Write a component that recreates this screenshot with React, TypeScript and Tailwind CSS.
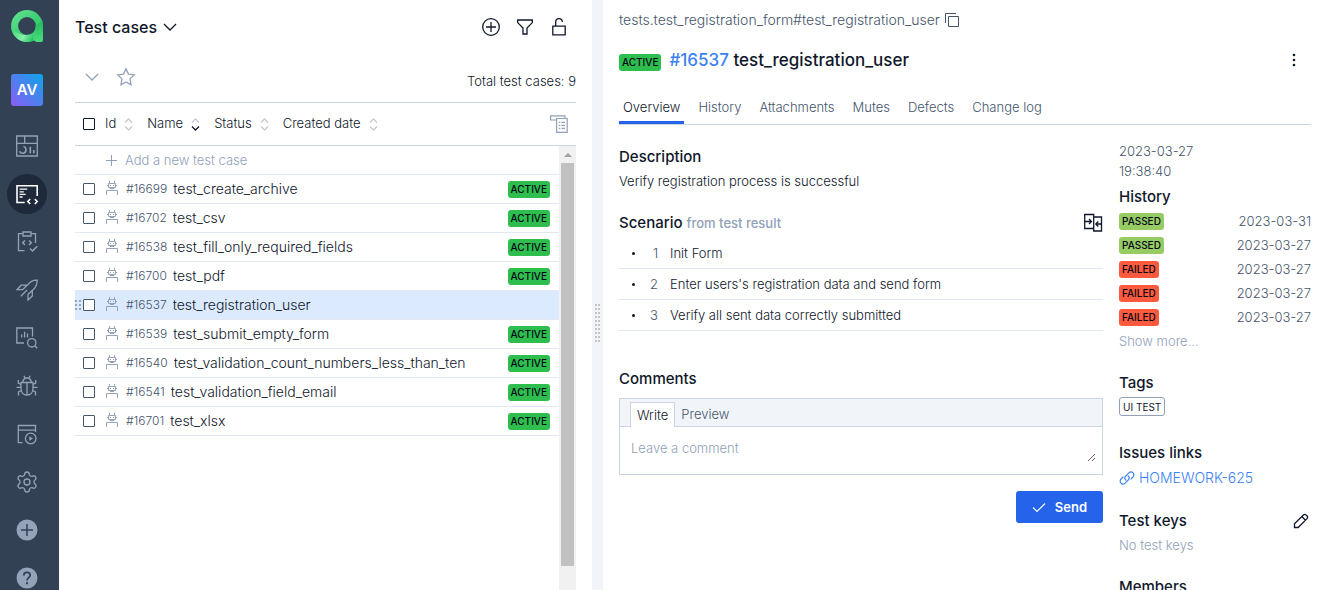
import type { ReactNode } from "react";
import { Settings } from "lucide-react";

type IconProps = { children: ReactNode; size?: number; box?: string; stroke?: number };

function Icon({ children, size = 24, box = "0 0 24 24", stroke = 1.3 }: IconProps) {
  return (
    <svg width={size} height={size} viewBox={box} fill="none" stroke="currentColor" strokeWidth={stroke} aria-hidden="true" className="shrink-0">
      {children}
    </svg>
  );
}

function Logo() {
  return (
    <svg width="32" height="32" viewBox="0 0 32 32" aria-hidden="true">
      <defs>
        <linearGradient id="ring" x1="0" y1="0" x2="1" y2="1">
          <stop offset="0" stopColor="#5fe08d" />
          <stop offset="0.5" stopColor="#3fd076" />
          <stop offset="1" stopColor="#22c55e" />
        </linearGradient>
        <linearGradient id="sweep" x1="0" y1="0" x2="1" y2="0.3">
          <stop offset="0" stopColor="#3ad271" />
          <stop offset="0.6" stopColor="#86efac" />
          <stop offset="1" stopColor="#22c55e" />
        </linearGradient>
        <linearGradient id="stem" x1="0" y1="0" x2="0" y2="1">
          <stop offset="0" stopColor="#22b95a" />
          <stop offset="1" stopColor="#4ade80" />
        </linearGradient>
      </defs>
      <circle cx="16" cy="16" r="12.4" fill="none" stroke="url(#ring)" strokeWidth="7" />
      <path d="M0.2 18C1.5 26 8 32 16 32c5 0 8-1.5 10-4l-3-5.4C20 26 9 27 0.2 18Z" fill="url(#sweep)" />
      <path d="M24.5 16c0 4-1 6-2.500 7.500V27c0 3 2 5 5 5h3a2 2 0 0 0 2-2V16c0-2-.3-3.500-.8-5Z" fill="url(#stem)" />
    </svg>
  );
}

const navItems: { label: string; active?: boolean; icon: ReactNode }[] = [
  {
    label: "Dashboards",
    icon: (
      <Icon>
        <path d="M1.700 2h20.600v20H1.700zM1.700 9.300h20.600M9.700 2v7.300" />
        <path d="M8.500 12.600a3.400 3.400 0 1 1-4 4.600M15.300 12.800v6.500M18.800 16v3.300" strokeWidth="1.600" />
      </Icon>
    ),
  },
  {
    label: "Test cases",
    active: true,
    icon: (
      <Icon stroke={1.6}>
        <path d="M9.700 20.500H2V3.800h20.200V14" />
        <path d="M4.600 7.200h7.600M4.600 9.800h4.200M4.600 12.400h6M4.600 15h3" strokeWidth="1.300" />
        <path d="m15.200 17-2.400 2.500 2.400 2.500M19.800 17l2.400 2.500-2.400 2.500" />
      </Icon>
    ),
  },
  {
    label: "Test plans",
    icon: (
      <Icon>
        <path d="M8 3.700H3.500v17h6M16 3.700h4.500V13M8 2h8v4H8z" />
        <path d="m10 10.500-2.300 2.300L10 15M14 10.500l2.300 2.300L14 15M15 18.500l2.500 2.500 4.800-4.800" strokeWidth="1.500" />
      </Icon>
    ),
  },
  {
    label: "Launches",
    icon: (
      <Icon>
        <path d="M7.500 11.700H2l4.200-4.500h6.300C15 3.500 18.500 2 22.200 2.200c0 3.800-1.400 7.500-4.900 10.300V18L13 22v-5.600M12 12l-6.200 6.200M7.500 11.700l4.500-4.500M12.800 16.400l4.500-3.900" />
      </Icon>
    ),
  },
  {
    label: "Analytics",
    icon: (
      <Icon>
        <path d="M9 17H1.800V2h15.700v8.500M6.700 8.500v3M9.600 5.700v5.800M12.500 7.500v4" />
        <circle cx="16.800" cy="16.800" r="4.200" />
        <path d="m19.800 19.800 2.500 2.500" />
      </Icon>
    ),
  },
  {
    label: "Defects",
    icon: (
      <Icon>
        <path d="M6 8.500h12v6c0 4-2.500 6.500-6 6.500s-6-2.500-6-6.500zM7.500 8.500C8 5.500 9.500 4 12 4s4 1.500 4.500 4.500M12 8.500V21M9 1.800l1 2.500M15 1.800l-1 2.500" />
        <path d="M6 10.500 3.300 9V6M6 13.300H1.500M6.500 16.500 3.500 18v3.500M18 10.500 20.700 9V6M18 13.300h4.500M17.500 16.500l3 1.500v3.500" />
      </Icon>
    ),
  },
  {
    label: "Jobs",
    icon: (
      <Icon>
        <path d="M7.500 20.700H3.300V3.500h17.200v4.700H3.300M20.500 8.200V10" />
        <circle cx="15.700" cy="16.500" r="5.300" />
        <path d="m14.300 14.300 3.700 2.200-3.700 2.200z" fill="currentColor" stroke="none" />
      </Icon>
    ),
  },
  { label: "Settings", icon: <Settings size={24} strokeWidth={1.3} /> },
  {
    label: "Create",
    icon: (
      <Icon>
        <circle cx="12" cy="12" r="10.500" fill="currentColor" stroke="none" />
        <path d="M12 6v12M6 12h12" stroke="#334155" strokeWidth="1.500" />
      </Icon>
    ),
  },
  {
    label: "Help",
    icon: (
      <Icon>
        <circle cx="12" cy="12" r="10.500" fill="currentColor" stroke="none" />
        <path d="M8.800 9.500c0-2 1.300-3.200 3.200-3.200s3.200 1.100 3.200 2.900c0 2.400-3.200 2.600-3.200 5.200" stroke="#334155" strokeWidth="1.800" />
        <path d="M12 16.200v2" stroke="#334155" strokeWidth="2" />
      </Icon>
    ),
  },
];

function Sidebar() {
  return (
    <nav className="flex flex-col overflow-hidden bg-[#334155] pl-[7px]">
      <a href="#home" aria-label="Home" className="mt-[10px] flex w-10 shrink-0 justify-center">
        <Logo />
      </a>
      <a
        href="#project"
        className="mx-1 mt-8 mb-4 flex size-8 shrink-0 items-center justify-center rounded-[3px] bg-[linear-gradient(45deg,#8b5cf6,#0ea5e9)] text-[15px] font-semibold text-white"
      >
        AV
      </a>
      {navItems.map((item) => (
        <a key={item.label} href="#section" aria-label={item.label} className="flex h-12 w-10 shrink-0 items-center justify-center">
          {item.active ? (
            <span className="flex size-10 items-center justify-center rounded-full bg-[#1e293b] text-white">{item.icon}</span>
          ) : (
            <span className="text-[#94a3b8]">{item.icon}</span>
          )}
        </a>
      ))}
    </nav>
  );
}

function Chevron() {
  return (
    <Icon size={14} box="0 0 14 14">
      <path d="m1 4 6 6 6-6" />
    </Icon>
  );
}

function SortIcon({ active = false }: { active?: boolean }) {
  return (
    <svg width="9" height="13" viewBox="0 0 9 13" fill="none" strokeWidth="1.300" aria-hidden="true">
      <path d="M1 4.500 4.500 1 8 4.500" stroke="#c5cad1" />
      <path d="M1 8.500 4.500 12 8 8.500" stroke={active ? "#0f172a" : "#c5cad1"} />
    </svg>
  );
}

function RobotIcon() {
  return (
    <svg width="12" height="16" viewBox="0 0 12 16" fill="none" stroke="#94a3b8" aria-hidden="true" className="shrink-0">
      <path d="M2.500 2.500h7v4h-7zM3.500 0v2M8.500 0v2M1.500 4v1M10.500 4v1M4 7.500h4" />
      <path d="M4.500 4v1M7.500 4v1" />
      <path d="M.5 14V9.500h11V14" />
    </svg>
  );
}

function Badge({ kind }: { kind: "ACTIVE" | "PASSED" | "FAILED" }) {
  const tone = {
    ACTIVE: "bg-[#2dbe4e]",
    PASSED: "bg-[#97cc64]",
    FAILED: "bg-[#fd5a3e]",
  }[kind];
  return <span className={`${tone} flex h-[17px] shrink-0 items-center rounded-[3px] px-[3px] text-[10px] font-medium text-slate-950`}>{kind}</span>;
}

function CheckBox({ label, dark = false }: { label: string; dark?: boolean }) {
  return (
    <input
      type="checkbox"
      aria-label={label}
      className={`${dark ? "border-slate-900" : "border-slate-600"} size-3 shrink-0 appearance-none rounded-[1px] border bg-white checked:bg-[#2563eb]`}
    />
  );
}

const testCases = [
  { id: 16699, name: "test_create_archive" },
  { id: 16702, name: "test_csv" },
  { id: 16538, name: "test_fill_only_required_fields" },
  { id: 16700, name: "test_pdf" },
  { id: 16537, name: "test_registration_user", selected: true },
  { id: 16539, name: "test_submit_empty_form" },
  { id: 16540, name: "test_validation_count_numbers_less_than_ten" },
  { id: 16541, name: "test_validation_field_email" },
  { id: 16701, name: "test_xlsx" },
];

function SortButton({ label, active = false }: { label: string; active?: boolean }) {
  return (
    <button className="flex items-center gap-2">
      {label}
      <SortIcon active={active} />
    </button>
  );
}

function CaseList() {
  return (
    <section className="flex min-w-0 flex-col px-4">
      <header className="flex h-[54px] shrink-0 items-center">
        <button className="flex items-center gap-[6px] text-base font-medium">
          Test cases
          <Chevron />
        </button>
        <div className="ml-auto flex">
          <button aria-label="Create test case" className="flex w-[34px] justify-center">
            <Icon size={20} box="0 0 20 20">
              <circle cx="10" cy="10" r="8.300" />
              <path d="M10 5v10M5 10h10" />
            </Icon>
          </button>
          <button aria-label="Filter" className="flex w-[34px] justify-center">
            <Icon size={20} box="0 0 20 20">
              <path d="M2.700 3h14.600v2.600L12 11v6H8v-6L2.700 5.600z" />
            </Icon>
          </button>
          <button aria-label="Lock" className="flex w-[34px] justify-center">
            <Icon size={20} box="0 0 20 20">
              <path d="M3.800 9.200h12.400v8.600H3.800zM6.700 9V5c0-1.900 1.300-3.300 3.300-3.300s3.300 1.300 3.300 3.300" />
            </Icon>
          </button>
        </div>
      </header>

      <div className="flex h-[49px] shrink-0 items-center border-b border-slate-300 pb-[2px] text-slate-400">
        <button aria-label="Expand all" className="flex w-[34px] justify-center">
          <Chevron />
        </button>
        <button aria-label="Add to favourites" className="flex w-[34px] justify-center">
          <Icon size={20} box="0 0 20 20">
            <path d="m10 1.800 2.500 5.300 5.700.8-4.200 4 1 5.800-5-2.800-5 2.800 1-5.800-4.200-4 5.700-.8z" />
          </Icon>
        </button>
        <span className="ml-auto self-end pb-[9px] text-[13px] leading-5 text-slate-900">Total test cases: 9</span>
      </div>

      <div className="flex h-[43px] shrink-0 items-center border-b border-slate-300 px-2 text-[13px]">
        <CheckBox label="Select all" dark />
        <div className="ml-[10px] flex gap-[14px]">
          <SortButton label="Id" />
          <SortButton label="Name" active />
          <SortButton label="Status" />
          <SortButton label="Created date" />
        </div>
        <button aria-label="Configure columns" className="ml-auto text-slate-400">
          <Icon size={18} box="0 0 18 18" stroke={1.2}>
            <path d="M6 5H.6V.8H15V3M6.600 3.500h10.600V17.300H6.600z" />
            <path d="M8.800 7.300h1.500M11.500 7.300h3.500M8.800 10.300h1.500M11.500 10.300h3.500M8.800 13.300h1.500M11.500 13.300h3.500" />
          </Icon>
        </button>
      </div>

      <div className="flex min-h-0 flex-1">
        <ul className="min-w-0 flex-1 text-sm">
          <li className="flex h-[29px] border-b border-slate-200">
            <button className="flex items-center gap-2 pl-[30px] text-[13px] text-slate-400">
              <Icon size={12} box="0 0 12 12" stroke={1}>
                <path d="M6.500 1v11M1 6.500h11" />
              </Icon>
              Add a new test case
            </button>
          </li>
          {testCases.map((item) => (
            <li
              key={item.id}
              className={`${item.selected ? "bg-[#dbeafe]" : ""} relative flex h-[29px] items-center border-b border-slate-200 pr-[9px] pl-2`}
            >
              {item.selected && (
                <svg width="6" height="10" viewBox="0 0 6 10" fill="#94a3b8" aria-hidden="true" className="absolute top-[9px] left-0">
                  <path d="M0 0h2v2H0zM4 0h2v2H4zM0 4h2v2H0zM4 4h2v2H4zM0 8h2v2H0zM4 8h2v2H4z" />
                </svg>
              )}
              <CheckBox label={`Select #${item.id}`} />
              <a href="#case" className="ml-[11px] flex min-w-0 flex-1 items-center gap-2">
                <RobotIcon />
                <span className="flex min-w-0 items-center gap-[6px]">
                  <span className="text-xs text-slate-600">#{item.id}</span>
                  <span className="truncate">{item.name}</span>
                </span>
              </a>
              {!item.selected && <Badge kind="ACTIVE" />}
            </li>
          ))}
        </ul>
        <div className="flex w-[17px] flex-col bg-[#f1f1f1] px-[2px]">
          <div className="flex h-[17px] items-center justify-center">
            <svg width="8" height="4" viewBox="0 0 8 4" fill="#a3a3a3" aria-hidden="true">
              <path d="M4 0 8 4H0z" />
            </svg>
          </div>
          <div className="mb-6 flex-1 bg-[#c1c1c1]" />
        </div>
      </div>
    </section>
  );
}

function Divider() {
  return (
    <div className="flex items-center justify-center bg-slate-100 pt-14">
      <svg width="5" height="38" viewBox="0 0 5 38" fill="#c5c5c5" aria-hidden="true">
        {[0, 4, 8, 12, 16, 20, 24, 28, 32, 36].map((y) => (
          <path key={y} d={`M0 ${y}h2v2H0zM3 ${y}h2v2H3z`} />
        ))}
      </svg>
    </div>
  );
}

const tabs = ["Overview", "History", "Attachments", "Mutes", "Defects", "Change log"];
const steps = ["Init Form", "Enter users's registration data and send form", "Verify all sent data correctly submitted"];

function Heading({ children }: { children: ReactNode }) {
  return <h2 className="text-[15px] leading-6 font-medium">{children}</h2>;
}

function Overview() {
  return (
    <div className="min-w-0 flex-1 pt-5">
      <Heading>Description</Heading>
      <p className="mt-[2px]">Verify registration process is successful</p>

      <div className="mt-5 flex items-center justify-between">
        <Heading>
          Scenario <span className="text-[13px] text-slate-400">from test result</span>
        </Heading>
        <button aria-label="Compare scenarios">
          <Icon size={20} box="0 0 20 20" stroke={1.3}>
            <path d="M1.700 1.500h9v14h-9zM10.700 4h7.800v14h-7.800v-2.500" />
            <path d="M2 8.500h6M6 6l2.500 2.500L6 11M18.500 11H13M15.300 8.500 12.800 11l2.500 2.500" />
          </Icon>
        </button>
      </div>
      <ol className="mt-[3px]">
        {steps.map((step, index) => (
          <li key={step} className="flex h-[31px] items-center border-b border-slate-200">
            <span className="ml-[13px] size-[3px] rounded-full bg-slate-900" />
            <span className="w-[23px] text-right text-slate-600">{index + 1}</span>
            <span className="ml-3">{step}</span>
          </li>
        ))}
      </ol>

      <div className="mt-9">
        <Heading>Comments</Heading>
      </div>
      <form className="mt-[7px]">
        <div className="border border-slate-300">
          <div className="flex h-7 items-end border-b border-slate-300 bg-slate-100 pl-[10px]">
            <button type="button" className="-mb-px h-[25px] border border-b-0 border-slate-300 bg-white px-[6px]">
              Write
            </button>
            <button type="button" className="h-6 px-[6px] text-slate-600">
              Preview
            </button>
          </div>
          <div className="flex pt-[11px] pr-[6px] pb-3 pl-[11px]">
            <textarea
              aria-label="Comment"
              placeholder="Leave a comment"
              className="h-6 min-w-0 flex-1 resize-y overflow-hidden bg-transparent leading-5 outline-none placeholder:text-slate-400"
            />
          </div>
        </div>
        <button type="button" className="mt-4 ml-auto flex h-8 items-center gap-[9px] rounded-[3px] bg-[#2563eb] px-4 font-semibold text-white">
          <Icon size={14} box="0 0 14 14" stroke={1.1}>
            <path d="m1 7.500 4 4 8-8" />
          </Icon>
          Send
        </button>
      </form>
    </div>
  );
}

const runs: { status: "PASSED" | "FAILED"; date: string }[] = [
  { status: "PASSED", date: "2023-03-31" },
  { status: "PASSED", date: "2023-03-27" },
  { status: "FAILED", date: "2023-03-27" },
  { status: "FAILED", date: "2023-03-27" },
  { status: "FAILED", date: "2023-03-27" },
];

function Details() {
  return (
    <aside className="w-48 shrink-0 pt-4 text-slate-600">
      <p>
        2023-03-27
        <br />
        19:38:40
      </p>
      <div className="mt-1 text-slate-900">
        <Heading>History</Heading>
      </div>
      <ul>
        {runs.map((run, index) => (
          <li key={index} className="flex h-6 items-center justify-between">
            <Badge kind={run.status} />
            {run.date}
          </li>
        ))}
      </ul>
      <button className="block h-6 text-slate-400">Show more...</button>

      <div className="mt-[18px] text-slate-900">
        <Heading>Tags</Heading>
        <span className="mt-[2px] flex h-[19px] w-fit items-center rounded-[3px] border border-slate-400 px-[3px] text-[10px] font-normal">UI TEST</span>
      </div>

      <div className="mt-[25px] text-slate-900">
        <Heading>Issues links</Heading>
        <a href="#issue" className="mt-px flex h-6 items-center gap-1 text-sm text-[#3b82f6]">
          <Icon size={16} box="0 0 24 24" stroke={1.8}>
            <path d="M13 8.500c2.500 1 3 4.300 1 6.300l-4.800 4.800c-1.800 1.800-4.700 1.800-6.300.2s-1.600-4.500.2-6.300L6.500 10" />
            <path d="M11 15.500c-2.500-1-3-4.300-1-6.300l4.800-4.800c1.800-1.800 4.700-1.800 6.300-.2s1.600 4.500-.2 6.300L17.500 14" />
          </Icon>
          HOMEWORK-625
        </a>
      </div>

      <div className="mt-[19px] flex items-center justify-between text-slate-900">
        <Heading>Test keys</Heading>
        <button aria-label="Edit test keys" className="mr-[2px]">
          <Icon size={16} box="0 0 16 16">
            <path d="M1.500 14.500v-3.700l8.600-8.600c1-1 2.200-1 3.100-.1l.7.7c.9.9.9 2.100-.1 3.100l-8.600 8.600zM8.800 3.500l3.700 3.700" />
          </Icon>
        </button>
      </div>
      <p className="leading-6 text-slate-400">No test keys</p>

      <div className="mt-[18px] text-slate-900">
        <Heading>Members</Heading>
      </div>
    </aside>
  );
}

function CaseDetails() {
  return (
    <main className="flex min-w-0 flex-col pr-[10px] pl-4 text-[13px] leading-5">
      <div className="flex h-10 shrink-0 items-center gap-1 text-sm text-slate-600">
        tests.test_registration_form#test_registration_user
        <button aria-label="Copy full name">
          <Icon size={16} box="0 0 16 16" stroke={1}>
            <path d="M4.500 4.500h10v10h-10zM1.500 11V1.500H12" />
          </Icon>
        </button>
      </div>
      <div className="flex h-10 shrink-0 items-center">
        <div className="pt-1">
          <Badge kind="ACTIVE" />
        </div>
        <h1 className="ml-2 text-[17px] leading-6 font-medium">
          <a href="#case" className="text-[#3b82f6]">
            #16537
          </a>{" "}
          test_registration_user
        </h1>
        <button aria-label="More actions" className="mr-2 ml-auto flex w-[18px] justify-center">
          <svg width="4" height="14" viewBox="0 0 4 14" fill="currentColor" aria-hidden="true">
            <circle cx="2" cy="2" r="1.300" />
            <circle cx="2" cy="7" r="1.300" />
            <circle cx="2" cy="12" r="1.300" />
          </svg>
        </button>
      </div>
      <div role="tablist" className="flex h-[45px] shrink-0 items-end gap-[10px] border-b border-slate-300">
        {tabs.map((tab, index) => (
          <button
            key={tab}
            role="tab"
            aria-selected={index === 0}
            className={`${index === 0 ? "border-[#2563eb] text-slate-900" : "border-transparent text-slate-600"} border-b-3 px-1 pb-1`}
          >
            {tab}
          </button>
        ))}
      </div>
      <div className="flex gap-4">
        <Overview />
        <Details />
      </div>
    </main>
  );
}

export default function App() {
  return (
    <div className="grid h-screen grid-cols-[59px_minmax(0,533fr)_11px_minmax(0,718fr)] grid-rows-[minmax(0,1fr)] overflow-hidden bg-white font-['Inter',sans-serif] font-light text-slate-900">
      <Sidebar />
      <CaseList />
      <Divider />
      <CaseDetails />
    </div>
  );
}
